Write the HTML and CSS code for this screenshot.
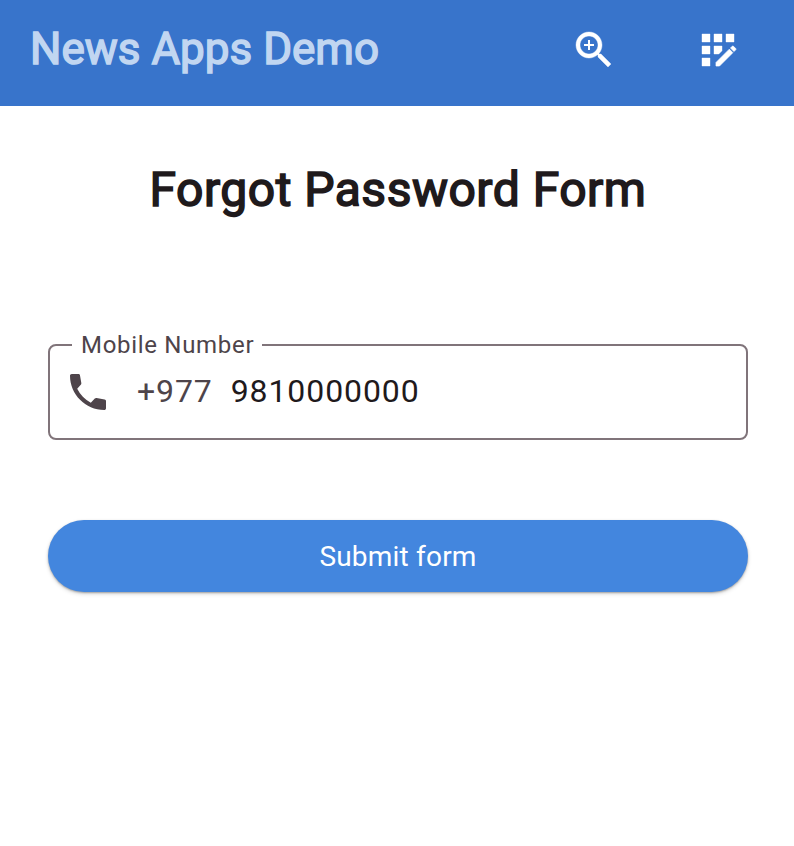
FILE: index.html
```html
<!DOCTYPE html>
<html lang="en">
<head>
<meta charset="utf-8">
<title>News Apps Demo</title>
<link rel="stylesheet" href="styles.css">
</head>
<body>
<header class="bar">
  <div class="brand">News Apps Demo</div>
  <button class="action" aria-label="Zoom in"><svg viewBox="0 0 24 24"><path class="bold" d="M15.5 14h-.79l-.28-.27C15.41 12.59 16 11.11 16 9.5 16 5.91 13.09 3 9.5 3S3 5.91 3 9.5 5.91 16 9.5 16c1.61 0 3.09-.59 4.23-1.57l.27.28v.79l5 4.99L20.49 19l-4.99-5zm-6 0C7.01 14 5 11.99 5 9.5S7.01 5 9.5 5 14 7.01 14 9.5 11.99 14 9.5 14z"/><path d="M12 10h-2v2H9v-2H7V9h2V7h1v2h2z"/></svg></button>
  <button class="action" aria-label="App registration"><svg viewBox="0 0 24 24"><path class="bold" d="M10 4h4v4h-4zM4 16h4v4H4zM4 10h4v4H4zM4 4h4v4H4zM14 12.42V10h-4v4h2.42zM16 4h4v4h-4z"/><path class="pencil" d="M20.88 11.29l-1.17-1.17c-.16-.16-.42-.16-.58 0l-.88.88L20 12.75l.88-.88c.16-.16.16-.42 0-.58zM11 18.25V20h1.75l6.67-6.67-1.75-1.75z"/></svg></button>
</header>
<main class="content">
  <h1 class="title">Forgot Password Form</h1>
  <form class="form">
    <fieldset class="field">
      <legend class="label">Mobile Number</legend>
      <div class="row">
        <svg class="phone" viewBox="0 0 24 24"><path d="M3.9 3H7.2c.4 0 .7.25.78.65L8.66 7.5c.06.35-.03.65-.28.9L6.6 10.4c1.5 2.9 3.8 5.3 6.8 7l2-2.1c.25-.25.55-.34.9-.28l4 .72c.42.08.7.37.7.8V20.1c0 .52-.38.9-.9.9C10.8 21 3 13.2 3 3.9 3 3.38 3.38 3 3.9 3z"/></svg>
        <span class="prefix">+977</span>
        <span class="number">9810000000</span>
      </div>
    </fieldset>
    <button class="submit" type="button">Submit form</button>
  </form>
</main>
</body>
</html>
```
FILE: styles.css
```css
* { box-sizing: border-box; }
body { margin: 0; min-height: 100vh; background: #fff; color: #1f1a1c; font-family: Roboto, sans-serif; }
button { border: 0; padding: 0; font-family: inherit; }
.bar { display: flex; height: 106px; padding: 3px 28px 9px 30px; align-items: center; background: #3874cb; }
.brand { flex: 1; font-size: 44px; line-height: 52px; color: #c1d6f1; -webkit-text-stroke: 1.5px #c1d6f1; white-space: nowrap; padding-bottom: 2px; }
.action { display: flex; width: 96px; height: 94px; align-items: center; justify-content: center; background: none; }
.action + .action { margin-left: 28px; }
.action svg { width: 48px; height: 48px; fill: #fff; }
.bold { stroke: #fff; stroke-width: .2px; }
.pencil { stroke: #fff; stroke-width: .35px; }
.content { padding: 56px 46px 40px 48px; }
.title { margin: 0; text-align: center; font-size: 48px; line-height: 56px; font-weight: 400; letter-spacing: .5px; -webkit-text-stroke: 1.6px #1f1a1c; }
.form { padding-top: 114px; }
.field { margin: 0; height: 108px; padding: 0 14px; border: 2px solid #80747a; border-radius: 8px; min-width: 0; }
.label { padding: 0 8px 0 9px; margin-left: 8px; font-size: 24px; line-height: 26px; letter-spacing: .7px; color: #4e444a; }
.row { display: flex; align-items: center; height: 68px; font-size: 32px; line-height: 36px; letter-spacing: .9px; }
.phone { width: 48px; height: 48px; fill: #4e444a; }
.prefix { margin-left: 25px; padding-bottom: 2px; color: #4e444a; }
.number { margin-left: 18px; padding-bottom: 2px; }
.submit { display: block; width: 100%; height: 72px; margin-top: 80px; border-radius: 36px; background: #4386de; color: #fff; font-size: 28px; letter-spacing: .2px; box-shadow: 0 1px 2px rgba(0,0,0,.28), 0 2px 4px rgba(0,0,0,.15); }
```
